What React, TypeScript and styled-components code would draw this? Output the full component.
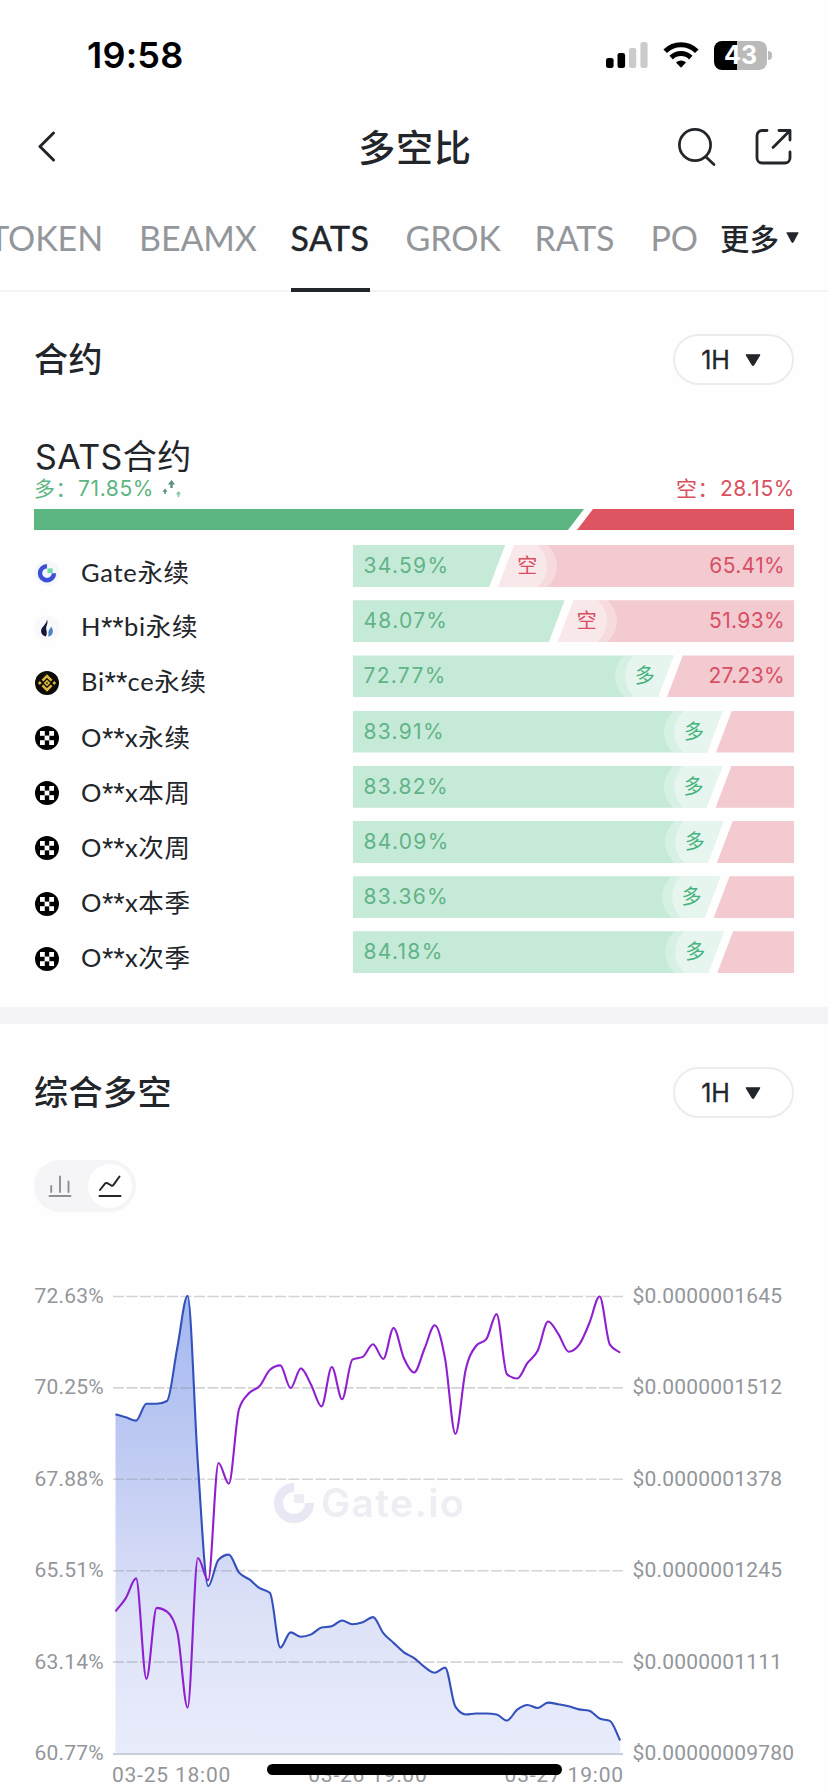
import React from 'react';
import styled, { createGlobalStyle } from 'styled-components';

const GlobalStyle = createGlobalStyle`
  *, *::before, *::after { box-sizing: border-box; }
  body { margin: 0; background: #fefefe; }
  svg { display: block; flex: none; }
`;

const CJK = "'Noto Sans CJK SC', sans-serif";
const INK = '#222529';
const GREY = '#93969a';
const GREEN = '#5cb681';
const RED = '#de5461';

const Screen = styled.main`
  position: relative;
  width: 828px;
  height: 1792px;
  overflow: hidden;
  background: #fefefe;
  color: ${INK};
  font-family: Lato, ${CJK};
  white-space: nowrap;
`;

/* ---------- status bar ---------- */

const StatusBar = styled.div`
  height: 110px;
  padding: 0 56px 0 87px;
  display: flex;
  align-items: center;
  justify-content: space-between;
`;

const Clock = styled.time`
  font: 600 36px/40px Inter, sans-serif;
  color: #000;
  letter-spacing: 0.2px;
`;

const StatusIcons = styled.div`
  display: flex;
  align-items: center;
  gap: 15px;
`;

const Battery = styled.div`
  display: flex;
  align-items: center;
  gap: 1px;
`;

const BatteryBody = styled.div`
  width: 53px;
  height: 29px;
  border-radius: 8px;
  background: linear-gradient(90deg, #000 43%, #bababa 43%);
  color: #fff;
  font: 700 25px/29px Inter, sans-serif;
  text-align: center;
`;

const BatteryTip = styled.div`
  width: 4px;
  height: 9px;
  border-radius: 0 4px 4px 0;
  background: #bababa;
`;

/* ---------- title bar ---------- */

const TitleBar = styled.header`
  height: 76px;
  padding: 0 36px 2px;
  display: grid;
  grid-template-columns: 120px 1fr 120px;
  align-items: center;
`;

const Title = styled.h1`
  margin: 0;
  padding: 0 0 2px 2px;
  text-align: center;
  font: 500 37px/47px ${CJK};
  letter-spacing: 0.8px;
`;

const TitleActions = styled.div`
  display: flex;
  justify-content: flex-end;
  gap: 37px;
`;

/* ---------- tabs ---------- */

const TabBar = styled.nav`
  height: 106px;
  display: flex;
  border-bottom: 2px solid #f3f3f4;
`;

const TabList = styled.div`
  width: 697px;
  height: 106px;
  display: flex;
  gap: 36px;
  overflow: hidden;
`;

const Tab = styled.div<{ $active?: boolean; $width: number; $end?: boolean }>`
  flex: none;
  width: ${(p) => p.$width}px;
  height: 106px;
  padding-top: 32px;
  display: flex;
  flex-direction: column;
  align-items: ${(p) => (p.$end ? 'flex-end' : 'flex-start')};
  font: 400 34px/40px Lato, sans-serif;
  -webkit-text-stroke: ${(p) => (p.$active ? 0.4 : 0)}px ${INK};
  letter-spacing: ${(p) => (p.$active ? 0.5 : -0.1)}px;
  color: ${(p) => (p.$active ? INK : GREY)};
  border-bottom: 4px solid ${(p) => (p.$active ? INK : 'transparent')};
`;

const More = styled.div`
  padding: 26px 0 0 23px;
  height: 76px;
  display: flex;
  align-items: center;
  gap: 7px;
  font: 500 29.5px/48px ${CJK};
`;

const MoreCaret = styled.span`
  padding-top: 1px;
`;

/* ---------- sections ---------- */

const Section = styled.section<{ $height: number }>`
  height: ${(p) => p.$height}px;
  padding: 0 34px;
`;

const SectionHead = styled.div<{ $top: number }>`
  padding-top: ${(p) => p.$top}px;
  display: flex;
  align-items: center;
  justify-content: space-between;
`;

const Heading = styled.h2`
  margin: 0;
  padding-bottom: 4px;
  font: 500 34px/46px ${CJK};
  letter-spacing: 0.5px;
`;

const Picker = styled.button`
  width: 121px;
  height: 51px;
  padding: 0 5px 0 0;
  display: flex;
  align-items: center;
  justify-content: center;
  gap: 15px;
  border: 2px solid #ececee;
  border-radius: 26px;
  background: #fff;
  color: ${INK};
  font: 400 25px/30px Inter, sans-serif;
  -webkit-text-stroke: 0.3px ${INK};
`;

const PairName = styled.h3`
  margin: 47px 0 0;
  height: 49px;
  padding-left: 1px;
  font: 400 34px/50px Inter, ${CJK};
  letter-spacing: 0.4px;
`;

const RatioLine = styled.div`
  height: 28px;
  padding-bottom: 12px;
  display: flex;
  justify-content: space-between;
  align-items: center;
`;

const Ratio = styled.div<{ $color: string }>`
  display: flex;
  align-items: center;
  color: ${(p) => p.$color};
  font: 400 21px/28px Inter, ${CJK};
  letter-spacing: 0.6px;
  &:last-child { margin-right: -1px; }
`;

const RatioLabel = styled.span`
  width: 44px;
`;

const RatioTrend = styled.span`
  margin-left: 8px;
`;

const SplitBar = styled.div<{ $height: number; $width: number }>`
  position: relative;
  width: ${(p) => p.$width}px;
  height: ${(p) => p.$height}px;
`;

const LongPart = styled.div<{ $edge: number; $color: string }>`
  position: absolute;
  inset: 0;
  background: ${(p) => p.$color};
  clip-path: polygon(0 0, ${(p) => p.$edge}px 0, ${(p) => p.$edge - 16}px 100%, 0 100%);
`;

const ShortPart = styled(LongPart)`
  clip-path: polygon(${(p) => p.$edge + 9}px 0, 100% 0, 100% 100%, ${(p) => p.$edge - 7}px 100%);
`;

/* Soft highlight behind the winning side's badge, running out to the slanted edge. */
const Halo = styled.span<{ $x: number; $flip?: boolean }>`
  position: absolute;
  left: ${(p) => (p.$flip ? p.$x - 50 : p.$x - 30)}px;
  top: -9px;
  width: 80px;
  height: 60px;
  border-radius: 34px / 30px;
  background: rgba(255, 255, 255, 0.3);
  &::after {
    content: '';
    position: absolute;
    top: 1px;
    bottom: 1px;
    left: ${(p) => (p.$flip ? 0 : 10)}px;
    right: ${(p) => (p.$flip ? 10 : 0)}px;
    border-radius: 30px / 29px;
    background: rgba(255, 255, 255, 0.38);
  }
`;

const Badge = styled.span<{ $x: number; $color: string }>`
  position: absolute;
  left: ${(p) => p.$x - 15}px;
  top: 6px;
  width: 30px;
  text-align: center;
  color: ${(p) => p.$color};
  font: 400 20px/28px ${CJK};
`;

const BarLabels = styled.div`
  position: absolute;
  inset: 0;
  padding: 7px 9px 0 11px;
  display: flex;
  justify-content: space-between;
  font: 400 21px/28px Inter, sans-serif;
`;

const LongLabel = styled.span`
  color: #62b388;
  letter-spacing: 1.3px;
`;

const ShortLabel = styled.span`
  color: #d74f63;
  letter-spacing: 0.35px;
`;

const Rows = styled.div`
  padding-top: 15px;
  display: flex;
  flex-direction: column;
  gap: 13.2px;
`;

const Row = styled.div`
  height: 42px;
  display: flex;
  justify-content: space-between;
`;

const Exchange = styled.div`
  height: 55px;
  display: flex;
  align-items: center;
  gap: 21px;
`;

const ExchangeName = styled.span`
  padding-bottom: 2px;
  font: 400 25.5px/40px Lato, ${CJK};
  letter-spacing: 0.7px;
`;

const Mask = styled.span`
  font-family: Roboto, sans-serif;
  letter-spacing: 0.4px;
`;

const IconBox = styled.span`
  width: 26px;
  height: 26px;
`;

const Divider = styled.div`
  height: 17px;
  background: #f4f4f6;
`;

/* ---------- chart ---------- */

const Toggle = styled.div`
  margin: 42px 0 0 0;
  width: 102px;
  height: 52px;
  padding: 4px;
  display: flex;
  border-radius: 26px;
  background: #f5f5f8;
`;

const ToggleItem = styled.div<{ $on?: boolean }>`
  width: ${(p) => (p.$on ? 44 : 50)}px;
  height: 44px;
  padding-right: ${(p) => (p.$on ? 0 : 7)}px;
  display: flex;
  align-items: center;
  justify-content: center;
  border-radius: 22px;
  background: ${(p) => (p.$on ? '#fff' : 'transparent')};
`;

const ChartArea = styled.div`
  margin-top: 69px;
  display: flex;
  align-items: flex-start;
`;

const Axis = styled.div<{ $width: number }>`
  width: ${(p) => p.$width}px;
  height: 487px;
  padding-left: 0.5px;
  display: flex;
  flex-direction: column;
  justify-content: space-between;
  color: ${GREY};
  font: 400 21px/30px Roboto, sans-serif;
  letter-spacing: 0.2px;
`;

const Plot = styled.div`
  position: relative;
  width: 520px;
  height: 510px;
  padding-top: 8px;
`;

const Dates = styled.div`
  width: 512px;
  margin: 1px 0 0 -1px;
  display: flex;
  justify-content: space-between;
  color: ${GREY};
  font: 400 21px/30px Roboto, sans-serif;
  letter-spacing: 0.8px;
`;

const Watermark = styled.div`
  position: absolute;
  left: 160px;
  top: 200px;
  display: flex;
  align-items: center;
  gap: 6px;
  color: #ededf3;
  font: 600 39px/44px Inter, sans-serif;
  letter-spacing: 1.4px;
  filter: blur(0.6px);
`;

const HomeIndicator = styled.div`
  position: absolute;
  left: 267px;
  top: 1764px;
  width: 295px;
  height: 11px;
  border-radius: 6px;
  background: #000;
`;

/* ---------- icons ---------- */

const SignalIcon = () => (
  <svg width="42" height="26" viewBox="0 0 42 26">
    <rect x="0" y="16" width="7.6" height="10" rx="2.2" fill="#000" />
    <rect x="11.5" y="11" width="7.6" height="15" rx="2.2" fill="#000" />
    <rect x="23" y="6" width="7.2" height="20" rx="2.2" fill="#cbcbcb" />
    <rect x="34.4" y="0" width="7.2" height="26" rx="2.2" fill="#cbcbcb" />
  </svg>
);

const WifiIcon = () => (
  <svg width="36" height="26" viewBox="0 0 36 26" fill="none" stroke="#000" strokeWidth="5">
    <path d="M2.2 9.2a22.4 22.4 0 0 1 31.6 0" />
    <path d="M8.2 15.6a14 14 0 0 1 19.6 0" />
    <path d="M18 25.8l-5-5.2a7.2 7.2 0 0 1 10 0z" fill="#000" stroke="none" />
  </svg>
);

const BackIcon = () => (
  <svg width="22" height="32" viewBox="0 0 22 32" fill="none" stroke={INK} strokeWidth="3" strokeLinecap="round" strokeLinejoin="round">
    <path d="M17.5 2L4 15.5 17.5 29" />
  </svg>
);

const SearchIcon = () => (
  <svg width="40" height="40" viewBox="0 0 40 40" fill="none" stroke={INK} strokeWidth="2.7" strokeLinecap="round">
    <circle cx="18" cy="18" r="15.6" />
    <path d="M29 30l8 7.6" />
  </svg>
);

const ShareIcon = () => (
  <svg width="38" height="40" viewBox="0 0 38 40" fill="none" stroke={INK} strokeWidth="2.8" strokeLinecap="round" strokeLinejoin="round">
    <path d="M13 3.500H8a5 5 0 0 0-5 5V31a5 5 0 0 0 5 5h23a5 5 0 0 0 5-5v-6" />
    <path d="M25 3.500h11v9.500M36 3.500L19 20.500" />
  </svg>
);

const Caret = ({ w, h }: { w: number; h: number }) => (
  <svg width={w} height={h} viewBox="0 0 16 12" preserveAspectRatio="none">
    <path d="M1 .8h14L8.9 11q-.9 1.2-1.8 0z" fill={INK} stroke={INK} strokeWidth="1" strokeLinejoin="round" />
  </svg>
);

const TrendArrows = () => (
  <svg width="20" height="18" viewBox="0 0 20 18" fill="#5d8f78">
    <path d="M9.5 0l3.6 4.4h-2.4V8H8.3V4.400H5.900z" />
    <path d="M3 8.6l2.5 3.200H3.800V14H2.200v-2.200H.5z" />
    <path d="M16.5 11l2.600 3.200h-1.800V17h-1.600v-2.800h-1.800z" fill="#7fc9a2" />
  </svg>
);

const GateIcon = () => (
  <svg width="26" height="26" viewBox="0 0 26 26">
    <circle cx="13" cy="13" r="12.6" fill="#f6f7fb" />
    <path d="M13 6.200A7 7 0 1 0 20 13.200" fill="none" stroke="#3c4fd6" strokeWidth="4.4" />
    <path d="M13.500 8.400h5.200V13h-5.200z" fill="#6fdcae" />
  </svg>
);

const HuobiIcon = () => (
  <svg width="26" height="26" viewBox="0 0 26 26">
    <circle cx="13" cy="13" r="12.6" fill="#f9f9fb" />
    <path d="M13 4.500C14.600 8.500 11.800 10.500 12.200 14c.3 2.600 1.400 4.700-.4 7.500C8.500 20.700 6.600 18 7.200 15 7.900 11.400 12.600 9.500 13 4.500z" fill="#14163a" />
    <path d="M17 11.500c2 2.300 2.400 5 1.300 7.200-.8 1.600-2.300 2.700-4.300 2.900 1-1.800.2-3.200.5-5 .3-2 2.100-2.900 2.500-5.100z" fill="#4a84bd" />
  </svg>
);

const BinanceIcon = () => (
  <svg width="26" height="26" viewBox="0 0 26 26">
    <circle cx="13" cy="13" r="12" fill="#0d0c08" />
    <g fill="none" stroke="#dcb63e" strokeWidth="2.6">
      <path d="M8.4 10.700L13 6.100l4.600 4.600M8.400 15.300l4.600 4.600 4.600-4.600" />
    </g>
    <g fill="#dcb63e">
      <path d="M13 9.700l3.300 3.300-3.300 3.300-3.300-3.300zM5.800 11.100L7.700 13l-1.900 1.900L3.900 13zM20.200 11.100l1.900 1.900-1.900 1.900-1.900-1.900z" />
    </g>
    <path d="M13 11.900l1.100 1.100-1.100 1.100-1.100-1.100z" fill="#0d0c08" />
  </svg>
);

const OkxIcon = () => (
  <svg width="26" height="26" viewBox="0 0 26 26">
    <circle cx="13" cy="13" r="12" fill="#000" />
    <g fill="#fff">
      <rect x="6" y="6" width="4.8" height="4.8" />
      <rect x="15.2" y="6" width="4.8" height="4.8" />
      <rect x="10.6" y="10.6" width="4.8" height="4.8" />
      <rect x="6" y="15.2" width="4.8" height="4.8" />
      <rect x="15.2" y="15.2" width="4.8" height="4.8" />
    </g>
  </svg>
);

const BarsIcon = () => (
  <svg width="24" height="24" viewBox="0 0 24 24" fill="none" stroke="#8d8f96" strokeWidth="1.9" strokeLinecap="round">
    <path d="M3.2 18v-6M12 18V2.500M20.500 18V7.500M1.500 22h21" />
  </svg>
);

const LineIcon = () => (
  <svg width="24" height="24" viewBox="0 0 24 24" fill="none" stroke={INK} strokeWidth="2" strokeLinecap="round" strokeLinejoin="round">
    <path d="M2 16l5-6.300q1-1.200 2.300-.5l4 2.300q1.300.6 2.200-.6L21.500 2.500M1.500 22h21" />
  </svg>
);

const WatermarkLogo = () => (
  <svg width="42" height="42" viewBox="0 0 42 42">
    <path d="M21 5.500A15.500 15.500 0 1 0 36.500 21" fill="none" stroke="#e7e8f4" strokeWidth="9" />
    <path d="M21 12h10v9H21z" fill="#ededf3" />
  </svg>
);

/* ---------- data ---------- */

const rows = [
  { name: 'Gate永续', icon: GateIcon, long: 34.59, short: '65.41%' },
  { name: 'H**bi永续', icon: HuobiIcon, long: 48.07, short: '51.93%' },
  { name: 'Bi**ce永续', icon: BinanceIcon, long: 72.77, short: '27.23%' },
  { name: 'O**x永续', icon: OkxIcon, long: 83.91 },
  { name: 'O**x本周', icon: OkxIcon, long: 83.82 },
  { name: 'O**x次周', icon: OkxIcon, long: 84.09 },
  { name: 'O**x本季', icon: OkxIcon, long: 83.36 },
  { name: 'O**x次季', icon: OkxIcon, long: 84.18 },
];

const ratioSeries = [
  453, 462, 472, 422, 422, 414, 257, 104, 600, 960, 882, 867, 920, 940, 966, 980, 1141, 1096, 1109, 1102,
  1082, 1078, 1061, 1072, 1066, 1051, 1098, 1127, 1155, 1172, 1198, 1215, 1200, 1315, 1338, 1335, 1335, 1338,
  1356, 1324, 1310, 1319, 1303, 1308, 1314, 1323, 1327, 1350, 1357, 1415,
];

const priceSeries = [
  1034, 995, 937, 1233, 1024, 1035, 1095, 1318, 877, 942, 597, 658, 437, 390, 370, 322, 309, 376, 318, 367,
  430, 314, 409, 292, 284, 247, 290, 199, 288, 330, 260, 191, 290, 511, 322, 252, 232, 158, 335, 348,
  302, 265, 180, 217, 269, 249, 185, 106, 248, 272,
];

const toPoints = (series: number[]) =>
  series.map((v, i) => [2.5 + i * 10.3, v / 2.9474 - 28.5] as [number, number]);

/* Monotone cubic interpolation, so that peaks never overshoot. */
function smoothPath(pts: [number, number][]) {
  const n = pts.length;
  const slope = (i: number) => (pts[i + 1][1] - pts[i][1]) / (pts[i + 1][0] - pts[i][0]);
  const tangents = pts.map((_, i) => {
    if (i === 0) return slope(0);
    if (i === n - 1) return slope(n - 2);
    const a = slope(i - 1);
    const b = slope(i);
    if (a * b <= 0) return 0;
    return Math.sign(a) * Math.min(Math.abs(a), Math.abs(b), Math.abs(a + b) / 4) * 2;
  });
  let d = `M${pts[0][0]} ${pts[0][1].toFixed(2)}`;
  for (let i = 0; i < n - 1; i++) {
    const [x0, y0] = pts[i];
    const [x1, y1] = pts[i + 1];
    const h = (x1 - x0) / 3;
    d += `C${x0 + h} ${y0 + tangents[i] * h} ${x1 - h} ${y1 - tangents[i + 1] * h} ${x1} ${y1}`;
  }
  return d;
}

const ratioPath = smoothPath(toPoints(ratioSeries));
const pricePath = smoothPath(toPoints(priceSeries));
const BASE = 465;
const gridLines = [0, 1, 2, 3, 4].map((i) => 7.5 + i * 91.4);

const PlotDrawing = () => (
  <svg width="512" height="470" viewBox="0 0 512 470" fill="none">
    <defs>
      <linearGradient id="fill" x1="0" y1="7" x2="0" y2={BASE} gradientUnits="userSpaceOnUse">
        <stop offset="0" stopColor="#a3b7f0" />
        <stop offset="0.35" stopColor="#c0cbf3" />
        <stop offset="0.7" stopColor="#dde2f7" />
        <stop offset="1" stopColor="#e9ecfb" />
      </linearGradient>
    </defs>
    <path d={`${ratioPath}L507.2 ${BASE}L2.5 ${BASE}Z`} fill="url(#fill)" />
    {gridLines.map((y) => (
      <path key={y} d={`M0 ${y}H510`} stroke="#8a8a94" strokeOpacity="0.36" strokeWidth="1.6" strokeDasharray="11 2.5" />
    ))}
    <path d={`M0 ${BASE}H510`} stroke="#cbcddd" strokeWidth="1.8" />
    <path d={ratioPath} stroke="#3350bb" strokeWidth="2.1" strokeLinejoin="round" />
    <path d={pricePath} stroke="#8f1fcf" strokeWidth="2.1" strokeLinejoin="round" />
  </svg>
);

const BAR_WIDTH = 441.5;

const RatioBar = ({ long, short }: { long: number; short?: string }) => {
  const edge = (BAR_WIDTH * long) / 100;
  const longWins = long > 50;
  const x = longWins ? edge - 29 : edge + 22;
  return (
    <SplitBar $height={42} $width={BAR_WIDTH}>
      <LongPart $edge={edge} $color="#c6ead8">{longWins && <Halo $x={x} />}</LongPart>
      <ShortPart $edge={edge} $color="#f3cad0">{!longWins && <Halo $x={x} $flip />}</ShortPart>
      <Badge $x={x} $color={longWins ? '#45b27c' : '#d94c61'}>{longWins ? '多' : '空'}</Badge>
      <BarLabels>
        <LongLabel>{long.toFixed(2)}%</LongLabel>
        {short && <ShortLabel>{short}</ShortLabel>}
      </BarLabels>
    </SplitBar>
  );
};

const MaskedName = ({ name }: { name: string }) => {
  const [head, tail] = name.split('**');
  return (
    <ExchangeName>
      {head}
      {tail && <Mask>**</Mask>}
      {tail}
    </ExchangeName>
  );
};

export default function App() {
  return (
    <Screen>
      <GlobalStyle />
      <StatusBar>
        <Clock>19:58</Clock>
        <StatusIcons>
          <SignalIcon />
          <WifiIcon />
          <Battery>
            <BatteryBody>43</BatteryBody>
            <BatteryTip />
          </Battery>
        </StatusIcons>
      </StatusBar>

      <TitleBar>
        <BackIcon />
        <Title>多空比</Title>
        <TitleActions>
          <SearchIcon />
          <ShareIcon />
        </TitleActions>
      </TitleBar>

      <TabBar>
        <TabList>
          <Tab $width={103} $end>TOKEN</Tab>
          <Tab $width={115.5}>BEAMX</Tab>
          <Tab $width={79} $active>SATS</Tab>
          <Tab $width={93}>GROK</Tab>
          <Tab $width={80}>RATS</Tab>
          <Tab $width={46}>PO</Tab>
        </TabList>
        <More>
          更多
          <MoreCaret><Caret w={13} h={11} /></MoreCaret>
        </More>
      </TabBar>

      <Section $height={715}>
        <SectionHead $top={42}>
          <Heading>合约</Heading>
          <Picker>1H<Caret w={16} h={12} /></Picker>
        </SectionHead>
        <PairName>SATS合约</PairName>
        <RatioLine>
          <Ratio $color={GREEN}>
            <RatioLabel>多：</RatioLabel>71.85%<RatioTrend><TrendArrows /></RatioTrend>
          </Ratio>
          <Ratio $color="#d9505f">
            <RatioLabel>空：</RatioLabel>28.15%
          </Ratio>
        </RatioLine>
        <SplitBar $height={21} $width={760}>
          <LongPart $edge={550} $color={GREEN} />
          <ShortPart $edge={550} $color={RED} />
        </SplitBar>
        <Rows>
          {rows.map(({ name, icon: Icon, long, short }) => (
            <Row key={name}>
              <Exchange>
                <IconBox><Icon /></IconBox>
                <MaskedName name={name} />
              </Exchange>
              <RatioBar long={long} short={short} />
            </Row>
          ))}
        </Rows>
      </Section>

      <Divider />

      <Section $height={768}>
        <SectionHead $top={43}>
          <Heading>综合多空</Heading>
          <Picker>1H<Caret w={16} h={12} /></Picker>
        </SectionHead>
        <Toggle>
          <ToggleItem><BarsIcon /></ToggleItem>
          <ToggleItem $on><LineIcon /></ToggleItem>
        </Toggle>
        <ChartArea>
          <Axis $width={79}>
            <span>72.63%</span>
            <span>70.25%</span>
            <span>67.88%</span>
            <span>65.51%</span>
            <span>63.14%</span>
            <span>60.77%</span>
          </Axis>
          <Plot>
            <Watermark><WatermarkLogo />Gate.io</Watermark>
            <PlotDrawing />
            <Dates>
              <span>03-25 18:00</span>
              <span>03-26 19:00</span>
              <span>03-27 19:00</span>
            </Dates>
          </Plot>
          <Axis $width={162}>
            <span>$0.0000001645</span>
            <span>$0.0000001512</span>
            <span>$0.0000001378</span>
            <span>$0.0000001245</span>
            <span>$0.0000001111</span>
            <span>$0.00000009780</span>
          </Axis>
        </ChartArea>
      </Section>
      <HomeIndicator />
    </Screen>
  );
}
